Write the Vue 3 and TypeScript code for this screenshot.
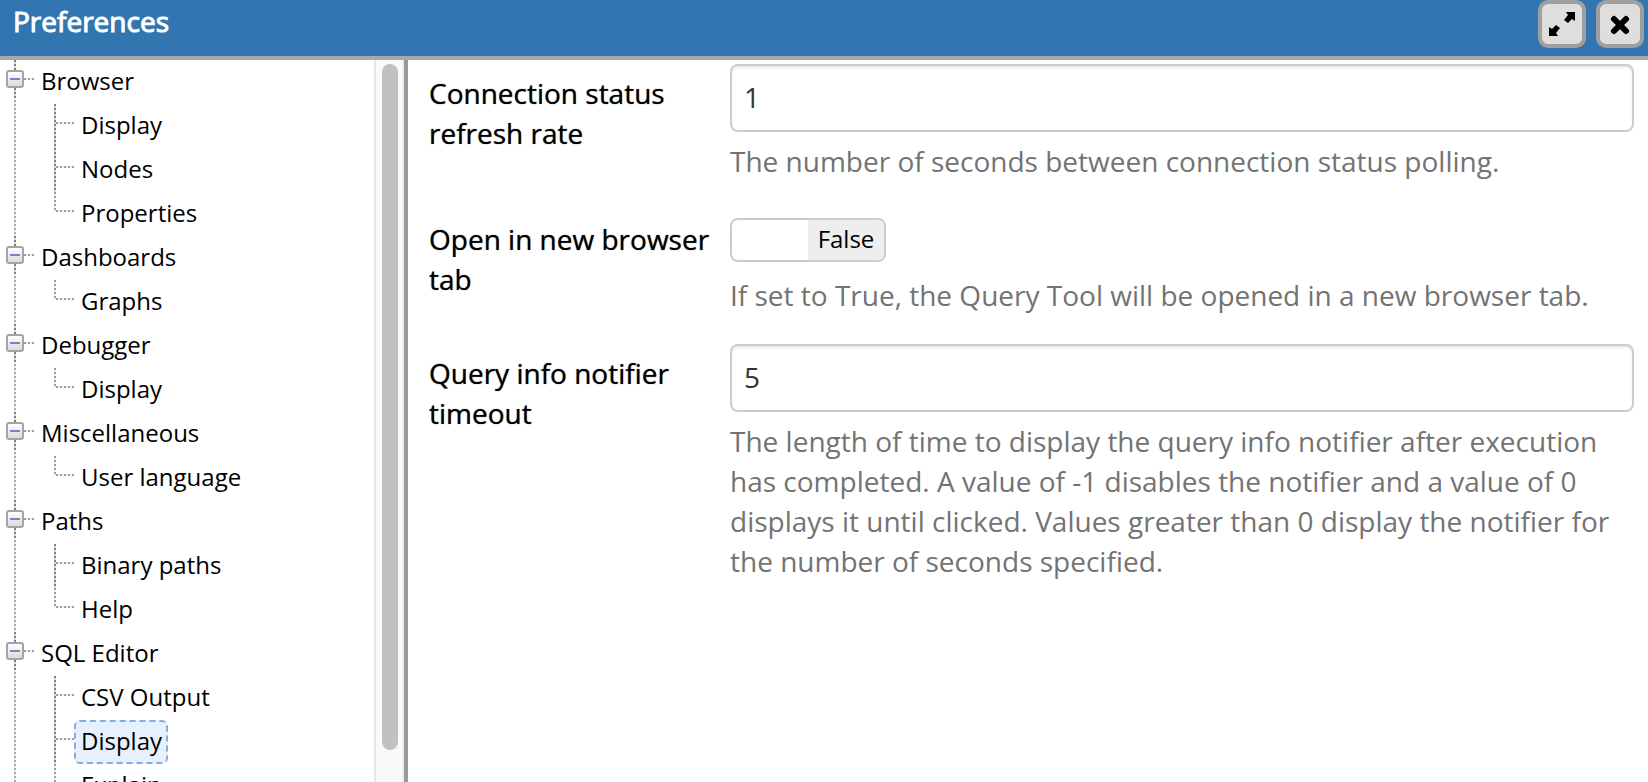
<script setup lang="ts">
import { ref } from 'vue'

interface TreeGroup {
  name: string
  children: string[]
}

const groups: TreeGroup[] = [
  { name: 'Browser', children: ['Display', 'Nodes', 'Properties'] },
  { name: 'Dashboards', children: ['Graphs'] },
  { name: 'Debugger', children: ['Display'] },
  { name: 'Miscellaneous', children: ['User language'] },
  { name: 'Paths', children: ['Binary paths', 'Help'] },
  { name: 'SQL Editor', children: ['CSV Output', 'Display', 'Explain'] },
]

const collapsed = ref<string[]>([])
const selected = ref('SQL Editor/Display')
const refreshRate = ref('1')
const newTab = ref(false)
const notifierTimeout = ref('5')

function toggleGroup(name: string): void {
  collapsed.value = collapsed.value.includes(name)
    ? collapsed.value.filter((n) => n !== name)
    : [...collapsed.value, name]
}
</script>

<template>
  <div class="dialog">
    <header class="titlebar">
      <h1>Preferences</h1>
      <div class="window-buttons">
        <button type="button" aria-label="Maximize">
          <svg viewBox="0 0 40 40" aria-hidden="true">
            <path d="M24 8h9v9l-3-2-4 4-4-3 4-5zM16 32H7v-9l3 2 4-4 4 3-4 5z" />
          </svg>
        </button>
        <button type="button" aria-label="Close">
          <svg viewBox="0 0 40 40" aria-hidden="true">
            <path d="M14 15l12 12M26 15L14 27" class="cross" />
          </svg>
        </button>
      </div>
    </header>

    <div class="body">
      <nav class="sidebar" aria-label="Preference categories">
        <ul class="tree">
          <li v-for="group in groups" :key="group.name" class="group">
            <div class="row">
              <button
                type="button"
                class="expander"
                :aria-label="'Toggle ' + group.name"
                :aria-expanded="!collapsed.includes(group.name)"
                @click="toggleGroup(group.name)"
              ></button>
              <span class="twig"></span>
              <span class="group-name">{{ group.name }}</span>
            </div>
            <ul v-if="!collapsed.includes(group.name)" class="children">
              <li v-for="child in group.children" :key="child" class="leaf">
                <button
                  type="button"
                  class="item"
                  :class="{ selected: selected === group.name + '/' + child }"
                  @click="selected = group.name + '/' + child"
                >{{ child }}</button>
              </li>
            </ul>
          </li>
        </ul>
        <div class="track"><div class="thumb"></div></div>
      </nav>

      <main class="panel">
        <div class="field">
          <label for="refresh-rate">Connection status refresh rate</label>
          <div class="control">
            <input id="refresh-rate" v-model="refreshRate" class="text" type="text" />
            <p>The number of seconds between connection status polling.</p>
          </div>
        </div>
        <div class="field">
          <label for="new-tab">Open in new browser tab</label>
          <div class="control">
            <div class="switch">
              <input id="new-tab" v-model="newTab" type="checkbox" />
              <span class="half" :class="{ filled: newTab }">{{ newTab ? 'True' : '' }}</span>
              <span class="half" :class="{ filled: !newTab }">{{ newTab ? '' : 'False' }}</span>
            </div>
            <p>If set to True, the Query Tool will be opened in a new browser tab.</p>
          </div>
        </div>
        <div class="field">
          <label for="notifier-timeout">Query info notifier timeout</label>
          <div class="control">
            <input id="notifier-timeout" v-model="notifierTimeout" class="text" type="text" />
            <p>
              The length of time to display the query info notifier after execution has completed. A
              value of -1 disables the notifier and a value of 0 displays it until clicked. Values
              greater than 0 display the notifier for the number of seconds specified.
            </p>
          </div>
        </div>
      </main>
    </div>
  </div>
</template>

<style>
body {
  margin: 0;
  background: #fff;
}
</style>

<style scoped>
.dialog,
.dialog * {
  box-sizing: border-box;
}

.dialog {
  display: flex;
  flex-direction: column;
  height: 100vh;
  overflow: hidden;
  font-family: 'Open Sans', 'Noto Sans', sans-serif;
  font-size: 28px;
  line-height: 40px;
  color: #000;
}

button,
input {
  margin: 0;
  font-family: inherit;
}

.titlebar {
  display: flex;
  flex: none;
  justify-content: space-between;
  align-items: flex-start;
  height: 60px;
  padding: 0 4px 0 13px;
  background: #3276b1;
  border-bottom: 4px solid #a9a9a9;
}

h1 {
  margin: 0;
  padding-top: 1px;
  font-size: 28px;
  font-weight: 400;
  line-height: 40px;
  color: #fff;
  -webkit-text-stroke: 1px #fff;
}

.window-buttons {
  display: flex;
  gap: 10px;
}

.window-buttons button {
  width: 48px;
  height: 48px;
  padding: 0;
  background: #dedede;
  border: 4px solid #9f9f9f;
  border-radius: 10px;
}

.window-buttons svg {
  display: block;
  width: 40px;
  height: 40px;
}

.cross {
  fill: none;
  stroke: #000;
  stroke-width: 6;
  stroke-linecap: round;
}

.body {
  display: flex;
  flex: 1;
  min-height: 0;
}

.sidebar {
  display: flex;
  flex: none;
  width: 408px;
  overflow: hidden;
  border-right: 4px solid #999;
}

ul {
  margin: 0;
  padding: 0;
  list-style: none;
}

.tree {
  flex: 1;
  font-size: 24px;
  line-height: 42px;
}

.group {
  background: repeating-linear-gradient(#aaa 0 2px, #eee 2px 4px) 14px 0 / 2px 100% no-repeat;
}

.row {
  display: flex;
  align-items: flex-start;
  height: 44px;
  padding-left: 6px;
  background: repeating-linear-gradient(#808080 0 2px, #ddd 2px 4px) 14px 0 / 2px 38px no-repeat;
}

.expander {
  width: 18px;
  height: 18px;
  margin-top: 10px;
  padding: 0;
  background:
    linear-gradient(#7088c4, #7088c4) center / 10px 2px no-repeat,
    linear-gradient(#fff, #dcdcdc);
  border: 2px solid #a4a4a4;
  border-radius: 3px;
}

.twig {
  width: 10px;
  height: 2px;
  margin-top: 18px;
  background: repeating-linear-gradient(90deg, #a0a0a0 0 2px, #eee 2px 4px);
}

.group-name {
  margin-left: 7px;
}

.leaf {
  height: 44px;
  padding-left: 74px;
  background:
    repeating-linear-gradient(#808080 0 2px, #ddd 2px 4px) 54px 0 / 2px 100% no-repeat,
    repeating-linear-gradient(90deg, #a0a0a0 0 2px, #eee 2px 4px) 56px 18px / 18px 2px no-repeat;
}

.leaf:last-child {
  background:
    repeating-linear-gradient(#a0a0a0 0 2px, #eee 2px 4px) 54px 0 / 2px 20px no-repeat,
    repeating-linear-gradient(90deg, #a0a0a0 0 2px, #eee 2px 4px) 56px 18px / 18px 2px no-repeat;
}

.group:last-child .leaf:last-child {
  background-size: 2px 100%, 18px 2px;
}

.item {
  display: block;
  height: 44px;
  padding: 0 4px 2px 5px;
  font-size: 24px;
  line-height: 38px;
  color: #000;
  background: transparent;
  border: 2px solid transparent;
  border-radius: 6px;
}

.item.selected {
  background: #e7f1fd;
  border: 2px dashed #84acdd;
}

.track {
  flex: none;
  width: 30px;
  padding: 4px 4px 32px 6px;
  background: #fafafa;
  border-right: 2px solid #ededed;
  border-left: 2px solid #e8e8e8;
}

.thumb {
  width: 16px;
  height: 100%;
  background: #c1c1c1;
  border-radius: 8px;
}

.panel {
  display: flex;
  flex: 1;
  flex-direction: column;
  gap: 28px;
  min-width: 0;
  padding: 4px 14px 0 21px;
}

.field {
  display: grid;
  grid-template-columns: 290px 1fr;
  column-gap: 11px;
}

label {
  padding-top: 9px;
  text-shadow: 0 0 1px rgba(0, 0, 0, 0.7);
}

.control {
  min-width: 0;
}

.text {
  display: block;
  width: 100%;
  height: 68px;
  padding: 0 12px 2px;
  font-size: 28px;
  line-height: 40px;
  color: #333;
  background: #fff;
  border: 2px solid #ccc;
  border-radius: 8px;
  box-shadow: inset 0 2px 2px rgba(0, 0, 0, 0.075);
}

p {
  margin: 9px 0 1px;
  color: #737373;
}

.switch {
  position: relative;
  display: flex;
  width: 156px;
  height: 44px;
  margin: 8px 0 13px;
  overflow: hidden;
  font-size: 24px;
  border: 2px solid #ccc;
  border-radius: 8px;
}

.switch input {
  position: absolute;
  inset: 0;
  width: 100%;
  height: 100%;
  opacity: 0;
}

.half {
  flex: 1;
  line-height: 38px;
  text-align: center;
}

.half.filled {
  background: #eee;
}

.switch + p {
  margin-top: 0;
}
</style>
